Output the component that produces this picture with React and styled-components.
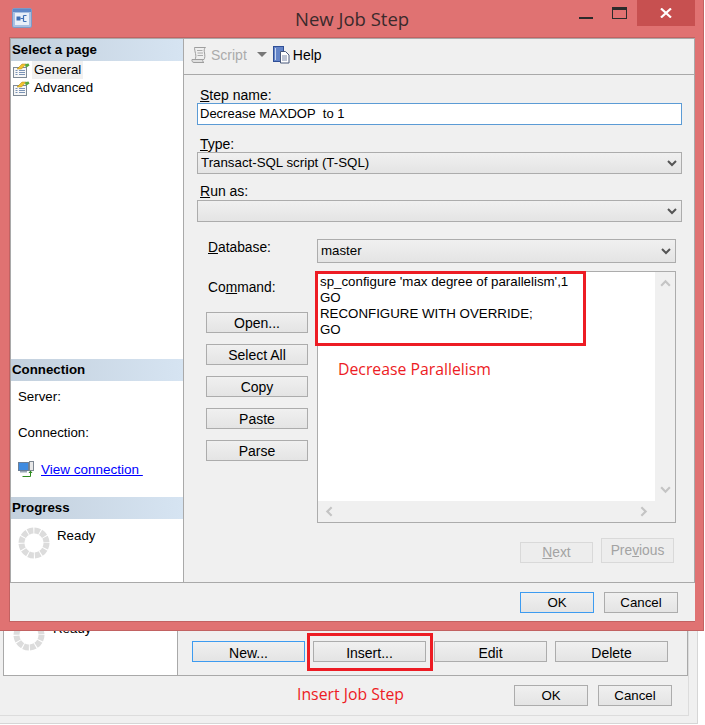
import React from "react";
import styled, {createGlobalStyle} from "styled-components";

const GlobalStyle = createGlobalStyle`
  html, body {
    margin: 0;
    background: #fff;
  }
  * {
    box-sizing: border-box;
  }
`;

const Chevron = ({dir = "down", color = "#555", size = 12}) => {
    const points = {
        down: "2,4 6,8 10,4",
        up: "2,8 6,4 10,8",
        right: "4,2 8,6 4,10",
        left: "8,2 4,6 8,10",
    };
    return (
        <svg width={size} height={size} viewBox="0 0 12 12">
            <polyline points={points[dir]} fill="none" stroke={color} strokeWidth="2"/>
        </svg>
    );
};

const AppIcon = () => (
    <svg width="20" height="20" viewBox="0 0 20 20">
        <rect x="0.5" y="0.5" width="19" height="19" rx="1.500" fill="#a9c0e2" stroke="#7d9ac6"/>
        <rect x="1" y="1" width="18" height="3" fill="#5f88c8"/>
        <rect x="3" y="5" width="14" height="12" fill="#e9eff8"/>
        <rect x="4.500" y="8.500" width="4" height="4" fill="#3f6fb5"/>
        <path d="M8.500 10.500h3M11.500 7.500v6M11.500 7.500h3M11.500 13.500h3" stroke="#3f6fb5" strokeWidth="1.200" fill="none"/>
    </svg>
);

const ScriptIcon = () => (
    <svg width="17" height="18" viewBox="0 0 17 18">
        <path d="M3.500 1.500h11c-1.500 1-1.500 3-1 5.500s.5 5-.5 6.500h-9c1-1.500 1-4 .5-6s-1-4.500-1-6z" fill="#efefef" stroke="#8a8a8a"/>
        <path d="M1 13.500h10.500c0 1.500.5 2.500 1.500 3h-10c-1.500 0-2.500-1.500-2-3z" fill="#dcdcdc" stroke="#8a8a8a"/>
        <path d="M6 4.500h5.500M6.500 7h5.500M6.500 9.500h5.500" stroke="#9a9a9a" fill="none"/>
    </svg>
);

const HelpIcon = () => (
    <svg width="17" height="18" viewBox="0 0 17 18">
        <rect x="0.500" y="0.500" width="10" height="15" fill="#6384c8" stroke="#2f4f96"/>
        <rect x="2" y="2" width="1" height="12" fill="#c8d6f0"/>
        <path d="M7.500 5.500h5l3.500 3.500v8h-8.500z" fill="#fff" stroke="#48587a"/>
        <path d="M9 10h5M9 12h5M9 14h5" stroke="#7a88a8" fill="none"/>
    </svg>
);

const PageIcon = () => (
    <svg width="17" height="15" viewBox="0 0 17 15">
        <rect x="0.500" y="4.500" width="13" height="10" fill="#f7f7f7" stroke="#7f8a96"/>
        <path d="M2.500 7.500h2M6 7.500h6M2.500 9.500h2M6 9.500h6M2.500 11.500h2M6 11.500h6" stroke="#7b93b5" fill="none"/>
        <path d="M4 6l5-5h4l-4.500 5z" fill="#f2c230" stroke="#a88414" strokeWidth="0.500"/>
        <path d="M12.500 1l3-.5 1 2-3 2-1.500-1.500z" fill="#5aa83c"/>
    </svg>
);

const ConnectionIcon = () => (
    <svg width="17" height="16" viewBox="0 0 17 16">
        <rect x="0.500" y="1.500" width="10" height="8" fill="#3f8be0" stroke="#6d7f96"/>
        <rect x="2" y="10" width="7" height="1.500" fill="#9aa6b5"/>
        <rect x="11.500" y="0.500" width="4" height="9" fill="#e8e8e8" stroke="#7d8792"/>
        <path d="M4.500 15.500h8v-4" fill="none" stroke="#2e8b1e"/>
        <path d="M10.500 12l2-2.500 2 2.500z" fill="#2e8b1e"/>
    </svg>
);

const Spinner = () => (
    <svg width="32" height="32" viewBox="0 0 32 32">
        <circle cx="16" cy="16" r="12.500" fill="none" stroke="#dcdcdc" strokeWidth="6" strokeDasharray="5.500 1.045"/>
    </svg>
);

const App = () => {
    return (
        <Desktop>
            <GlobalStyle/>
            <BackWindow>
                <BackClient>
                    <BackPanels>
                        <BackSide>
                            <ProgressRow>
                                <Spinner/>
                                <span>Ready</span>
                            </ProgressRow>
                        </BackSide>
                        <BackMain>
                            <WideButton $focused>New...</WideButton>
                            <WideButton $marked>Insert...</WideButton>
                            <WideButton>Edit</WideButton>
                            <WideButton>Delete</WideButton>
                        </BackMain>
                    </BackPanels>
                    <BackFooter>
                        <BackNote>Insert Job Step</BackNote>
                        <DialogButton>OK</DialogButton>
                        <DialogButton>Cancel</DialogButton>
                    </BackFooter>
                </BackClient>
            </BackWindow>

            <FrontWindow>
                <TitleBar>
                    <AppIconWrap><AppIcon/></AppIconWrap>
                    <Title>New Job Step</Title>
                    <WindowControls>
                        <MinButton/>
                        <MaxButton/>
                        <CloseButton>
                            <svg width="12" height="10" viewBox="0 0 12 10">
                                <path d="M1 0.500l10 9M11 0.500l-10 9" stroke="#fff" strokeWidth="2.200"/>
                            </svg>
                        </CloseButton>
                    </WindowControls>
                </TitleBar>
                <Client>
                    <Body>
                        <Sidebar>
                            <SectionHeader>Select a page</SectionHeader>
                            <PageList>
                                <PageItem $selected><PageIcon/><span>General</span></PageItem>
                                <PageItem><PageIcon/><span>Advanced</span></PageItem>
                            </PageList>
                            <SectionHeader $pushed>Connection</SectionHeader>
                            <ConnectionInfo>
                                <InfoLine>Server:</InfoLine>
                                <InfoLine>Connection:</InfoLine>
                                <ConnectionLink>
                                    <ConnectionIcon/>
                                    <a href="#view">View connection&nbsp;</a>
                                </ConnectionLink>
                            </ConnectionInfo>
                            <SectionHeader>Progress</SectionHeader>
                            <SideProgress>
                                <Spinner/>
                                <span>Ready</span>
                            </SideProgress>
                        </Sidebar>
                        <Main>
                            <Toolbar>
                                <ToolButton $disabled><ScriptIcon/><span>Script</span></ToolButton>
                                <DropCaret/>
                                <ToolButton><HelpIcon/><span>Help</span></ToolButton>
                            </Toolbar>
                            <Content>
                                <Field $after={12}>
                                    <FieldLabel><u>S</u>tep name:</FieldLabel>
                                    <TextBox>Decrease MAXDOP&nbsp; to 1</TextBox>
                                </Field>
                                <Field $after={10}>
                                    <FieldLabel><u>T</u>ype:</FieldLabel>
                                    <SelectBox>
                                        Transact-SQL script (T-SQL)
                                        <Chevron/>
                                    </SelectBox>
                                </Field>
                                <Field $after={17}>
                                    <FieldLabel $tall><u>R</u>un as:</FieldLabel>
                                    <SelectBox>
                                        <Chevron/>
                                    </SelectBox>
                                </Field>
                                <CommandArea>
                                    <CommandSide>
                                        <SideLabel $height={40}><u>D</u>atabase:</SideLabel>
                                        <SideLabel $height={33}>Co<u>m</u>mand:</SideLabel>
                                        <CommandButtons>
                                            <SideButton>Open...</SideButton>
                                            <SideButton>Select All</SideButton>
                                            <SideButton>Copy</SideButton>
                                            <SideButton>Paste</SideButton>
                                            <SideButton>Parse</SideButton>
                                        </CommandButtons>
                                    </CommandSide>
                                    <CommandMain>
                                        <DatabaseSelect>
                                            master
                                            <Chevron/>
                                        </DatabaseSelect>
                                        <Editor>
                                            <EditorText>
                                                <SqlHighlight/>
                                                <div>sp_configure 'max degree of parallelism',1</div>
                                                <div>GO</div>
                                                <div>RECONFIGURE WITH OVERRIDE;</div>
                                                <div>GO</div>
                                                <EditorNote>Decrease Parallelism</EditorNote>
                                            </EditorText>
                                            <VScroll>
                                                <Chevron dir="up" color="#c4c4c4" size={13}/>
                                                <Chevron color="#c4c4c4" size={13}/>
                                            </VScroll>
                                            <HScroll>
                                                <Chevron dir="left" color="#c4c4c4" size={13}/>
                                                <Chevron dir="right" color="#c4c4c4" size={13}/>
                                            </HScroll>
                                            <ScrollCorner/>
                                        </Editor>
                                    </CommandMain>
                                </CommandArea>
                                <PagerRow>
                                    <PagerButton $low><u>N</u>ext</PagerButton>
                                    <PagerButton>Pre<u>v</u>ious</PagerButton>
                                </PagerRow>
                            </Content>
                        </Main>
                    </Body>
                    <FrontFooter>
                        <DialogButton $focused>OK</DialogButton>
                        <DialogButton>Cancel</DialogButton>
                    </FrontFooter>
                </Client>
            </FrontWindow>
        </Desktop>
    );
};
export default App;

const Desktop = styled.div`
  position: relative;
  width: 705px;
  height: 725px;
  overflow: hidden;
  font-family: "Liberation Sans", Arial, sans-serif;
  font-size: 13.3px;
  color: #000;
`;

const buttonFace = `
  display: flex;
  align-items: center;
  justify-content: center;
  height: 21px;
  padding: 0;
  font-family: "Liberation Sans", Arial, sans-serif;
  font-size: 13.3px;
  color: #000;
  background: linear-gradient(#f0f0f0, #e4e4e4);
  border: 1px solid #acacac;
`;

/* window behind the dialog */
const BackWindow = styled.div`
  width: 698px;
  height: 724px;
  background: #f0f0f0;
  border-right: 1px solid #d6d6d6;
  border-bottom: 1px solid #d6d6d6;
  padding: 0 8px 8px 0;
`;

const BackClient = styled.div`
  height: 716px;
  border-right: 1px solid #dcdcdc;
  border-bottom: 1px solid #dcdcdc;
`;

const BackPanels = styled.div`
  display: flex;
  height: 676px;
  margin-left: 3px;
  border-left: 1px solid #a9a9a9;
  border-right: 1px solid #a9a9a9;
  border-bottom: 1px solid #a9a9a9;
`;

const BackSide = styled.div`
  width: 174px;
  background: #fff;
  border-right: 1px solid #a9a9a9;
  padding: 619px 0 0 9px;
`;

const ProgressRow = styled.div`
  display: flex;
  align-items: flex-start;
  gap: 8px;

  > span {
    margin-top: 2px;
  }
`;

const BackMain = styled.div`
  flex: 1;
  display: flex;
  gap: 8px;
  padding: 641px 0 0 14px;
`;

const WideButton = styled.button`
  ${buttonFace};
  position: relative;
  width: 113px;
  padding-top: 2px;
  font-size: 14px;
  border-color: ${props => (props.$focused ? "#3d9bf0" : "#acacac")};

  ${props => props.$marked && `
    &::after {
      content: "";
      position: absolute;
      top: -9px;
      left: -7px;
      right: -8px;
      bottom: -10px;
      border: 3px solid #ed1c24;
    }
  `}
`;

const BackFooter = styled.div`
  display: flex;
  align-items: flex-start;
  gap: 10px;
  padding: 9px 16px 0 297px;
`;

const BackNote = styled.div`
  flex: 1;
  margin-top: -2px;
  font-family: "Open Sans", sans-serif;
  font-size: 15.8px;
  color: #ed1c24;
`;

const DialogButton = styled.button`
  ${buttonFace};
  width: 74px;
  border-color: ${props => (props.$focused ? "#3d9bf0" : "#acacac")};
`;

/* the New Job Step dialog, laid over the other window */
const FrontWindow = styled.div`
  position: absolute;
  top: 0;
  left: 0;
  width: 704px;
  height: 631px;
  display: flex;
  flex-direction: column;
  padding: 0 8px 8px 9px;
  background: #e07272;
  border-right: 1px solid #c26262;
  border-bottom: 1px solid #c26262;
`;

const TitleBar = styled.div`
  flex: none;
  display: flex;
  align-items: flex-start;
  height: 37px;
`;

const AppIconWrap = styled.div`
  width: 100px;
  padding: 8px 0 0 3px;
`;

const Title = styled.div`
  flex: 1;
  padding: 6px 0 0 186px;
  font-family: "Open Sans", sans-serif;
  font-size: 18.5px;
  line-height: 26px;
  color: #3a2a2c;
`;

const WindowControls = styled.div`
  display: flex;
  align-items: flex-start;
`;

const MinButton = styled.div`
  width: 14px;
  height: 2px;
  margin: 17px 19px 0 0;
  background: #2b2b2b;
`;

const MaxButton = styled.div`
  width: 15px;
  height: 12px;
  margin: 7px 10px 0 0;
  border: 1px solid #2b2b2b;
  border-top-width: 3px;
`;

const CloseButton = styled.div`
  display: flex;
  align-items: center;
  justify-content: center;
  width: 58px;
  height: 26px;
  background: #c75050;
`;

const Client = styled.div`
  flex: 1;
  display: flex;
  flex-direction: column;
  background: #f0f0f0;
  border: 1px solid #c26262;
  border-right: none;
`;

const Body = styled.div`
  height: 545px;
  display: flex;
  border-bottom: 1px solid #a9a9a9;
  border-right: 1px solid #a9a9a9;
`;

const Sidebar = styled.div`
  width: 174px;
  display: flex;
  flex-direction: column;
  background: #fff;
  border-right: 1px solid #a9a9a9;
  border-left: 1px solid #a9a9a9;
  border-top: 1px solid #a9a9a9;
`;

const SectionHeader = styled.div`
  height: 22px;
  padding-left: 1px;
  line-height: 21px;
  font-weight: bold;
  font-size: 13.3px;
  color: #000;
  background: linear-gradient(90deg, #c3d0dd, #d6e4f2);
  margin-top: ${props => (props.$pushed ? "auto" : "0")};
`;

const PageList = styled.div`
  display: flex;
  flex-direction: column;
`;

const PageItem = styled.div`
  display: flex;
  align-items: center;
  height: 18px;
  padding-left: 2px;
  gap: 2px;

  > span {
    padding: 0 2px;
    line-height: 18px;
    background: ${props => (props.$selected ? "#f0f0f0" : "transparent")};
  }
`;

const ConnectionInfo = styled.div`
  display: flex;
  flex-direction: column;
  height: 116px;
  padding: 8px 0 0 7px;
`;

const InfoLine = styled.div`
  height: 36px;
  line-height: 16px;
`;

const ConnectionLink = styled.div`
  display: flex;
  align-items: center;
  gap: 6px;
  height: 16px;

  > a {
    font-size: 13.5px;
    color: #0000ff;
    text-decoration: underline;
  }
`;

const SideProgress = styled.div`
  height: 63px;
  display: flex;
  align-items: flex-start;
  gap: 7px;
  padding: 8px 0 0 7px;

  > span {
    margin-top: 1px;
  }
`;

const Main = styled.div`
  flex: 1;
  display: flex;
  flex-direction: column;
  border-top: 1px solid #a9a9a9;
`;

const Toolbar = styled.div`
  flex: none;
  display: flex;
  align-items: center;
  height: 36px;
  padding: 0 0 4px 7px;
  font-size: 14px;
  border-bottom: 1px solid #a9a9a9;
`;

const ToolButton = styled.div`
  display: flex;
  align-items: center;
  gap: 3px;
  color: ${props => (props.$disabled ? "#9a9a9a" : "#000")};
  opacity: ${props => (props.$disabled ? 0.8 : 1)};
`;

const DropCaret = styled.div`
  width: 0;
  height: 0;
  margin: 0 6px 0 10px;
  border-left: 5px solid transparent;
  border-right: 5px solid transparent;
  border-top: 5px solid #777;
`;

const Content = styled.div`
  flex: 1;
  padding: 13px 12px 0 13px;
`;

const Field = styled.div`
  margin-bottom: ${props => props.$after}px;
`;

const FieldLabel = styled.div`
  height: ${props => (props.$tall ? 16 : 15)}px;
  padding-left: 3px;
  font-size: 14px;
  line-height: 14px;
`;

const TextBox = styled.div`
  height: 22px;
  padding-left: 2px;
  font-size: 13px;
  line-height: 20px;
  background: #fff;
  border: 1px solid #5b9bd5;
`;

const SelectBox = styled.div`
  display: flex;
  align-items: center;
  justify-content: space-between;
  height: 22px;
  padding: 0 3px 1px 3px;
  background: linear-gradient(#f0f0f0, #e4e4e4);
  border: 1px solid #acacac;

  > svg {
    margin-left: auto;
  }
`;

const CommandArea = styled.div`
  display: flex;
  padding: 0 6px 0 9px;
`;

const CommandSide = styled.div`
  width: 111px;
  flex: none;
`;

const SideLabel = styled.div`
  height: ${props => props.$height}px;
  padding-left: 2px;
  font-size: 13.8px;
  line-height: 18px;
`;

const CommandButtons = styled.div`
  display: flex;
  flex-direction: column;
  gap: 11px;
`;

const SideButton = styled.button`
  ${buttonFace};
  width: 102px;
  font-size: 14px;
`;

const CommandMain = styled.div`
  flex: 1;
  display: flex;
  flex-direction: column;
  gap: 8px;
`;

const DatabaseSelect = styled(SelectBox)`
  height: 24px;
`;

const Editor = styled.div`
  height: 252px;
  display: grid;
  grid-template-columns: 1fr 20px;
  grid-template-rows: 1fr 21px;
  background: #fff;
  border: 1px solid #acacac;
`;

const EditorText = styled.div`
  position: relative;
  padding: 2px 0 0 2px;
  line-height: 16px;
  background: #fff;
`;

const SqlHighlight = styled.div`
  position: absolute;
  top: -1px;
  left: -3px;
  width: 271px;
  height: 75px;
  border: 3px solid #ed1c24;
`;

const EditorNote = styled.div`
  position: absolute;
  top: 86px;
  left: 20px;
  font-family: "Open Sans", sans-serif;
  font-size: 15.8px;
  line-height: 22px;
  color: #ed1c24;
`;

const VScroll = styled.div`
  display: flex;
  flex-direction: column;
  align-items: center;
  justify-content: space-between;
  padding: 5px 0;
  background: #f0f0f0;
`;

const HScroll = styled.div`
  display: flex;
  align-items: center;
  justify-content: space-between;
  padding: 0 5px;
  background: #f0f0f0;
`;

const ScrollCorner = styled.div`
  background: #f0f0f0;
`;

const PagerRow = styled.div`
  display: flex;
  align-items: flex-start;
  justify-content: flex-end;
  gap: 8px;
  padding: 15px 8px 0 0;
`;

const PagerButton = styled.button`
  ${buttonFace};
  width: 73px;
  height: ${props => (props.$low ? 21 : 25)}px;
  margin-top: ${props => (props.$low ? 4 : 0)}px;
  font-size: 13.8px;
  color: #a3a3a3;
  background: #ededed;
  border-color: #d9d9d9;
`;

const FrontFooter = styled.div`
  flex: 1;
  display: flex;
  align-items: flex-start;
  justify-content: flex-end;
  gap: 10px;
  padding: 9px 17px 0 0;
`;
